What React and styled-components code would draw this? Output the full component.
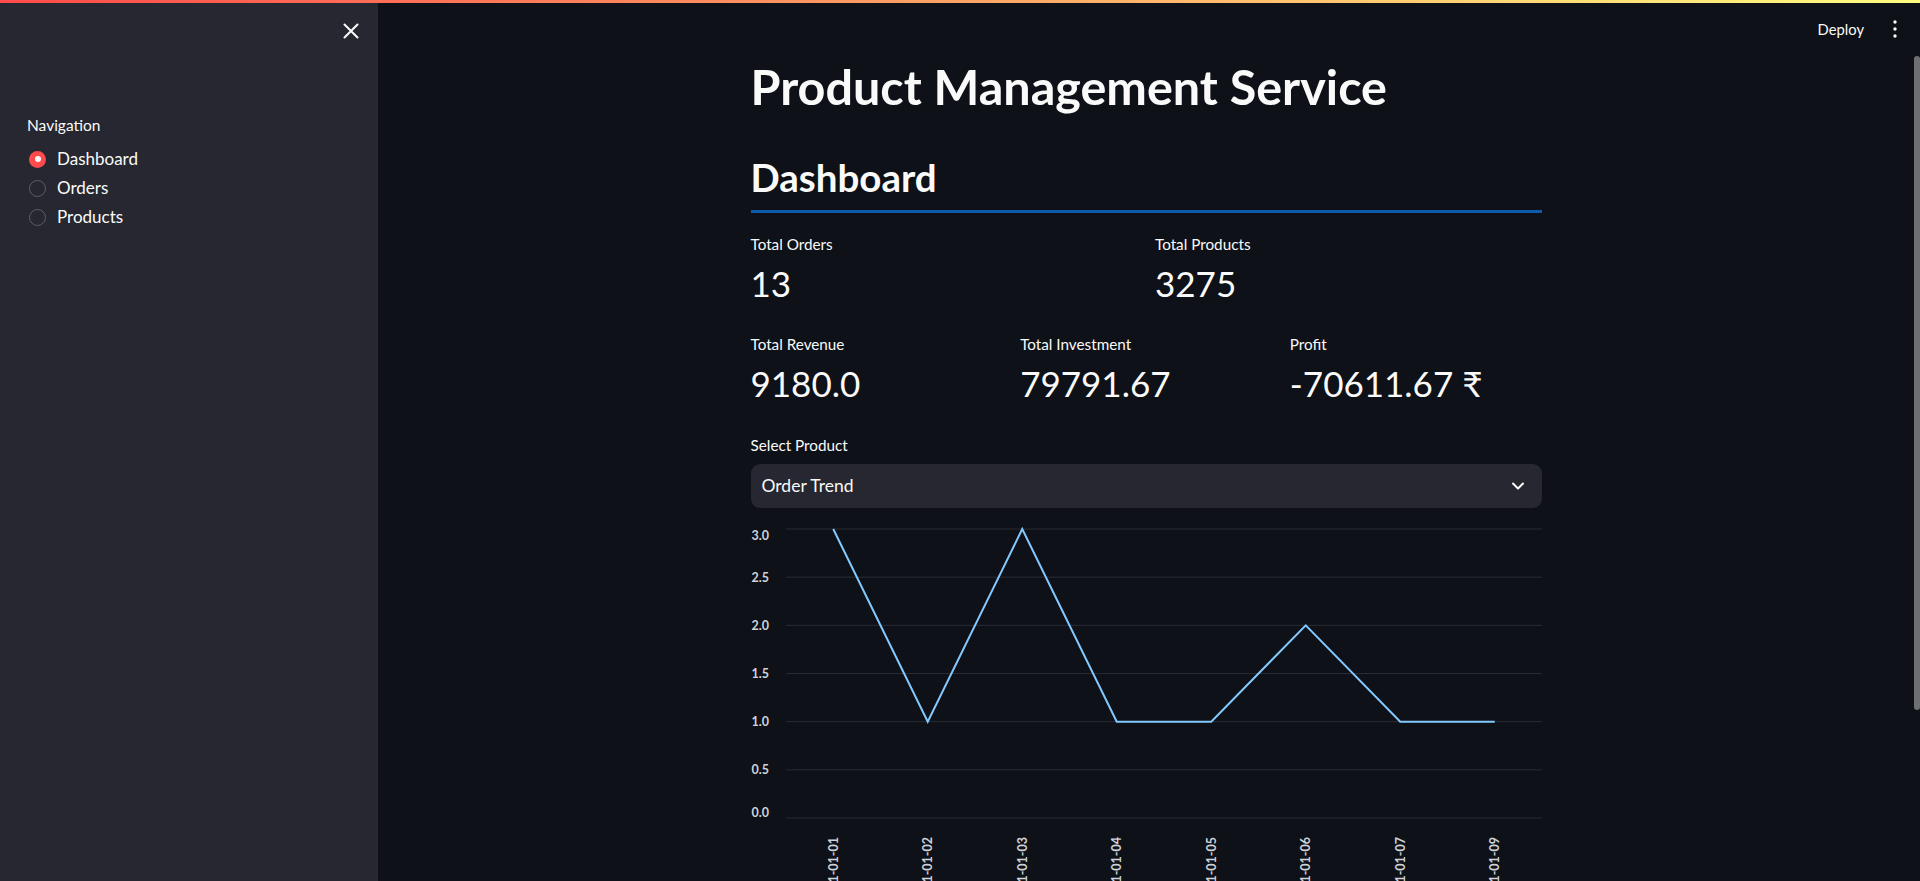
import React from "react";
import styled, { createGlobalStyle } from "styled-components";

const FONT = `Lato, "Noto Sans", sans-serif`;

const GlobalStyle = createGlobalStyle`
  html, body, #root {
    margin: 0;
    padding: 0;
    height: 100%;
  }
  body {
    background: #0e1117;
    color: #fafafa;
    font-family: ${FONT};
    overflow: hidden;
  }
  * {
    box-sizing: border-box;
  }
`;

const orders = [
  { date: "2021-01-01", count: 3 },
  { date: "2021-01-02", count: 1 },
  { date: "2021-01-03", count: 3 },
  { date: "2021-01-04", count: 1 },
  { date: "2021-01-05", count: 1 },
  { date: "2021-01-06", count: 2 },
  { date: "2021-01-07", count: 1 },
  { date: "2021-01-09", count: 1 },
];

const navItems = ["Dashboard", "Orders", "Products"];

const CloseIcon = () => (
  <svg width="26" height="26" viewBox="0 0 24 24" fill="none">
    <path
      d="M6 6L18 18M18 6L6 18"
      stroke="#fafafa"
      strokeWidth="1.9"
      strokeLinecap="round"
    />
  </svg>
);

const KebabIcon = () => (
  <svg width="20" height="20" viewBox="0 0 20 20">
    <circle cx="10" cy="3" r="1.7" fill="#fafafa" />
    <circle cx="10" cy="10" r="1.7" fill="#fafafa" />
    <circle cx="10" cy="17" r="1.7" fill="#fafafa" />
  </svg>
);

const ChevronIcon = () => (
  <svg width="16" height="16" viewBox="0 0 16 16" fill="none">
    <polyline
      points="3,5.5 8,10.5 13,5.5"
      stroke="#fafafa"
      strokeWidth="2"
      strokeLinecap="round"
      strokeLinejoin="round"
    />
  </svg>
);

const TrendChart = ({ data }) => {
  const width = 791;
  const height = 400;
  const left = 35;
  const top = 13;
  const unit = 96.33;
  const band = (width - left) / data.length;
  const yOf = v => top + (3 - v) * unit;
  const xOf = i => left + (i + 0.5) * band;
  const ticks = [0, 0.5, 1, 1.5, 2, 2.5, 3];
  const points = data.map((d, i) => `${xOf(i)},${yOf(d.count)}`).join(" ");

  return (
    <ChartSvg width={width} height={height} viewBox={`0 0 ${width} ${height}`}>
      {ticks.map(t => (
        <g key={t}>
          <line
            x1={left}
            x2={width}
            y1={yOf(t)}
            y2={yOf(t)}
            stroke="#2a2d35"
            strokeWidth="1"
          />
          <AxisText
            x={18}
            y={yOf(t) + (t === 3 ? 6 : t === 0 ? -5 : 0)}
            textAnchor="end"
            dominantBaseline="central"
          >
            {t.toFixed(1)}
          </AxisText>
        </g>
      ))}
      <polyline
        points={points}
        fill="none"
        stroke="#83c9ff"
        strokeWidth="2"
        strokeLinejoin="miter"
      />
      {data.map((d, i) => (
        <AxisText
          key={d.date}
          transform={`translate(${xOf(i)}, 321) rotate(-90)`}
          textAnchor="end"
          dominantBaseline="central"
        >
          {d.date}
        </AxisText>
      ))}
    </ChartSvg>
  );
};

export default function App() {
  return (
    <>
      <GlobalStyle />
      <Page>
        <Decoration />
        <Body>
          <Sidebar>
            <SideHeader>
              <IconButton aria-label="Close sidebar">
                <CloseIcon />
              </IconButton>
            </SideHeader>
            <Nav>
              <NavLabel>Navigation</NavLabel>
              <RadioList>
                {navItems.map((item, i) => (
                  <RadioRow key={item}>
                    <RadioDot checked={i === 0} />
                    <RadioText>{item}</RadioText>
                  </RadioRow>
                ))}
              </RadioList>
            </Nav>
          </Sidebar>

          <Main>
            <MainColumn>
              <Header>
                <DeployButton>Deploy</DeployButton>
                <IconButton aria-label="Main menu">
                  <KebabIcon />
                </IconButton>
              </Header>

              <Content>
                <Title>Product Management Service</Title>
                <SubTitle>Dashboard</SubTitle>
                <Divider />

                <MetricRow cols={2} space={22}>
                  <Metric>
                    <MetricLabel>Total Orders</MetricLabel>
                    <MetricValue>13</MetricValue>
                  </Metric>
                  <Metric>
                    <MetricLabel>Total Products</MetricLabel>
                    <MetricValue>3275</MetricValue>
                  </Metric>
                </MetricRow>

                <MetricRow cols={3} space={31}>
                  <Metric>
                    <MetricLabel>Total Revenue</MetricLabel>
                    <MetricValue>9180.0</MetricValue>
                  </Metric>
                  <Metric>
                    <MetricLabel>Total Investment</MetricLabel>
                    <MetricValue>79791.67</MetricValue>
                  </Metric>
                  <Metric>
                    <MetricLabel>Profit</MetricLabel>
                    <MetricValue>-70611.67 ₹</MetricValue>
                  </Metric>
                </MetricRow>

                <FieldLabel>Select Product</FieldLabel>
                <SelectBox>
                  <span>Order Trend</span>
                  <ChevronIcon />
                </SelectBox>

                <TrendChart data={orders} />
              </Content>
            </MainColumn>
            <ScrollRail>
              <ScrollThumb />
            </ScrollRail>
          </Main>
        </Body>
      </Page>
    </>
  );
}

const Page = styled.div`
  display: flex;
  flex-direction: column;
  height: 100vh;
  background: #0e1117;
`;

const Decoration = styled.div`
  flex: none;
  height: 3px;
  background: linear-gradient(90deg, #ff4b4b 0%, #fffd80 100%);
`;

const Body = styled.div`
  flex: 1;
  display: flex;
  min-height: 0;
`;

const Sidebar = styled.aside`
  flex: none;
  width: 378px;
  background: #262730;
  display: flex;
  flex-direction: column;
`;

const SideHeader = styled.div`
  height: 56px;
  display: flex;
  align-items: center;
  justify-content: flex-end;
  padding-right: 14px;
`;

const IconButton = styled.button`
  display: flex;
  align-items: center;
  justify-content: center;
  padding: 0;
  border: none;
  background: transparent;
  cursor: pointer;
`;

const Nav = styled.nav`
  padding: 57px 0 0 27px;
`;

const NavLabel = styled.div`
  font-size: 15.5px;
  line-height: 1.2;
  color: #fafafa;
`;

const RadioList = styled.div`
  display: flex;
  flex-direction: column;
  margin-top: 10px;
  padding-left: 2px;
`;

const RadioRow = styled.label`
  display: flex;
  align-items: center;
  height: 29px;
  gap: 11px;
  cursor: pointer;
`;

const RadioDot = styled.span`
  flex: none;
  width: 17px;
  height: 17px;
  border-radius: 50%;
  background: ${p => (p.checked ? "#ff4b4b" : "transparent")};
  border: ${p => (p.checked ? "none" : "1px solid #5d5f68")};
  display: flex;
  align-items: center;
  justify-content: center;
  &::after {
    content: "";
    display: ${p => (p.checked ? "block" : "none")};
    width: 6px;
    height: 6px;
    border-radius: 50%;
    background: #fafafa;
  }
`;

const RadioText = styled.span`
  font-size: 17px;
  line-height: 1.2;
  color: #fafafa;
`;

const Main = styled.main`
  flex: 1;
  display: flex;
  min-width: 0;
  overflow: hidden;
`;

const MainColumn = styled.div`
  flex: 1;
  min-width: 0;
`;

const ScrollRail = styled.div`
  flex: none;
  width: 6px;
  padding-top: 53px;
`;

const ScrollThumb = styled.div`
  height: 654px;
  border-radius: 3px;
  background: #6e6f73;
`;

const Header = styled.header`
  height: 52px;
  display: flex;
  align-items: center;
  justify-content: flex-end;
  padding-right: 9px;
  gap: 21px;
`;

const DeployButton = styled.button`
  border: none;
  background: transparent;
  color: #fafafa;
  font-family: ${FONT};
  font-size: 14.75px;
  padding: 6px 0;
  cursor: pointer;
`;

const Content = styled.div`
  width: 791px;
  margin: 0 auto;
  padding: 2px 0 190px;
`;

const Title = styled.h1`
  margin: 0;
  font-size: 48.5px;
  font-weight: 700;
  line-height: 1.2;
  color: #fafafa;
`;

const SubTitle = styled.h2`
  margin: 39px 0 0;
  font-size: 38.5px;
  font-weight: 700;
  line-height: 1.2;
  color: #fafafa;
`;

const Divider = styled.hr`
  margin: 10px 0 0;
  border: none;
  height: 3px;
  background: #0d5cab;
`;

const MetricRow = styled.div`
  display: grid;
  grid-template-columns: repeat(${p => p.cols}, 1fr);
  gap: 18px;
  margin-top: ${p => p.space}px;
`;

const Metric = styled.div`
  display: flex;
  flex-direction: column;
  gap: 8.5px;
`;

const MetricLabel = styled.div`
  font-size: 15.25px;
  line-height: 1.2;
  color: #fafafa;
`;

const MetricValue = styled.div`
  font-size: 35px;
  line-height: 1.2;
  color: #fafafa;
  white-space: nowrap;
`;

const FieldLabel = styled.div`
  margin-top: 32px;
  font-size: 15.25px;
  line-height: 1.2;
  color: #fafafa;
`;

const SelectBox = styled.div`
  margin-top: 9.5px;
  height: 44px;
  border-radius: 9px;
  background: #262730;
  display: flex;
  align-items: center;
  justify-content: space-between;
  padding: 0 16px 0 11px;
  font-size: 17.5px;
  line-height: 1.2;
  color: #fafafa;
`;

const ChartSvg = styled.svg`
  display: block;
  margin-top: 8px;
  overflow: visible;
`;

const AxisText = styled.text`
  font-family: ${FONT};
  font-size: 12.5px;
  font-weight: 700;
  fill: #cfd2d8;
`;
